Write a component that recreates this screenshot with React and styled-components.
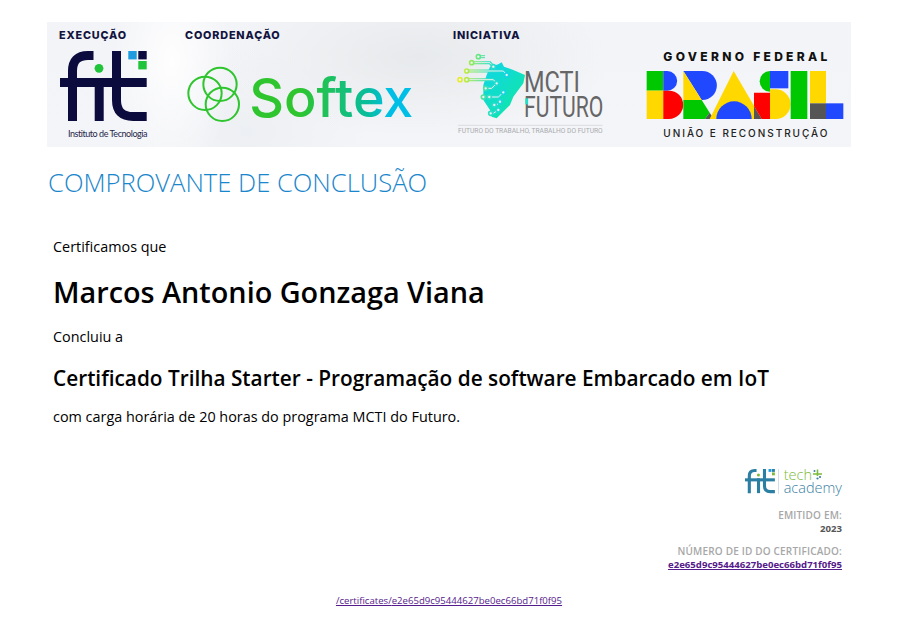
import React from 'react';
import styled, { createGlobalStyle } from 'styled-components';

const GlobalStyle = createGlobalStyle`
    html, body {
        margin: 0;
        padding: 0;
        background: white;
        color: black;
        font-family: "Open Sans", "Liberation Sans", sans-serif;
    }
`;

const Page = styled.div`
    width: 804px;
    padding: 22px 0 0 47px;
`;

const Banner = styled.header`
    display: flex;
    height: 125px;
    background:
        radial-gradient(ellipse 60px 120px at 125px 40px, rgba(255, 255, 255, 0.9), transparent),
        radial-gradient(ellipse 190px 80px at 370px 35px, rgba(228, 231, 233, 0.8), transparent),
        radial-gradient(ellipse 120px 90px at 200px 110px, rgba(232, 236, 240, 0.6), transparent),
        linear-gradient(180deg, #f3f4f7, #f4f5f8);
`;

const Column = styled.div`
    width: ${(p) => p.$width}px;
    flex: none;
`;

const Label = styled.div`
    margin: 8px 0 0 12px;
    font-family: Inter, "Liberation Sans", sans-serif;
    font-size: 10.8px;
    line-height: 12px;
    font-weight: 800;
    letter-spacing: 0.85px;
    color: #12143f;
`;

const Logo = styled.svg`
    display: block;
    overflow: visible;
    margin: ${(p) => p.$margin};
`;

const Caption = styled.div`
    margin: 7px 0 0 21px;
    font-family: Lato, sans-serif;
    font-size: 9px;
    line-height: 11px;
    letter-spacing: -0.45px;
    color: #26264a;
`;

const Heading = styled.h1`
    margin: 19px 0 0 1px;
    font-size: 25.6px;
    line-height: 34px;
    font-weight: 300;
    color: #1a86cc;
`;

const Content = styled.main`
    padding: 37px 0 0 6px;
`;

const Line = styled.p`
    margin: ${(p) => p.$margin || 0};
    font-size: 14.4px;
    line-height: 20px;
`;

const Name = styled.h2`
    margin: 16px 0 0;
    font-size: 28.8px;
    line-height: 38px;
    font-weight: 600;
`;

const Course = styled.h3`
    margin: 17px 0 0;
    font-size: 20.8px;
    line-height: 28px;
    font-weight: 600;
`;

const Meta = styled.aside`
    display: flex;
    flex-direction: column;
    align-items: flex-end;
    margin: 41px 9px 0 0;
`;

const MetaLabel = styled.div`
    margin-top: ${(p) => p.$top}px;
    font-size: 10px;
    line-height: 14px;
    font-weight: 600;
    letter-spacing: 0.18px;
    color: #a7a7a7;
`;

const MetaValue = styled.div`
    font-size: 9.6px;
    line-height: 14px;
    font-weight: 700;
    color: #555;
`;

const MetaLink = styled.a`
    font-size: 9.6px;
    line-height: 14px;
    font-weight: 700;
    color: #551a8b;
`;

const FooterLink = styled.a`
    display: block;
    margin-top: 22px;
    text-align: center;
    font-size: 9.6px;
    line-height: 14px;
    color: #551a8b;
`;

function FitMark({ ink, accent, width, margin }) {
    return (
        <Logo $margin={margin} width={width} height={(width * 70) / 87} viewBox="60 51 87 70">
            <g fill="none" stroke={ink} strokeWidth="9">
                <path d="M72.5 121V71q0-15.5 15.5-15.5H93.5" />
                <path d="M60 82.5H146.7" />
                <path d="M99.2 78V121" />
                <path d="M116.5 51V100q0 16.5 16.5 16.5H146.7" />
            </g>
            <circle cx="99" cy="68.3" r="4.4" fill={accent} />
            <rect x="128.3" y="51" width="8.4" height="8.4" fill="#1d9ce0" />
            <rect x="138.3" y="51" width="8.4" height="8.4" fill={ink} />
            <rect x="138.3" y="61" width="8.4" height="8.4" fill={accent} />
        </Logo>
    );
}

function SoftexLogo() {
    return (
        <Logo $margin="18px 0 0 7px" width="240" height="70" viewBox="0 0 720 210">
            <defs>
                <linearGradient id="softex" x1="210" x2="700" y1="0" y2="0" gradientUnits="userSpaceOnUse">
                    <stop offset="0.3" stopColor="#2ec52f" />
                    <stop offset="0.72" stopColor="#08bd9c" />
                    <stop offset="0.85" stopColor="#00bfe6" />
                </linearGradient>
            </defs>
            <g fill="none" stroke="#2ec52f" strokeWidth="6">
                <circle cx="75" cy="100" r="50" />
                <circle cx="120" cy="73" r="50" />
                <circle cx="127" cy="133" r="50" />
            </g>
            <text
                x="208"
                y="170"
                fontFamily="Inter, sans-serif"
                fontWeight="500"
                fontSize="160"
                fill="url(#softex)"
                textLength="492"
                lengthAdjust="spacingAndGlyphs"
            >
                Softex
            </text>
        </Logo>
    );
}

const circuits = [
    'M85 35H105',
    'M65 53H120L130 65',
    'M50 78H160L170 90',
    'M50 104H130L140 115',
    'M107 130H125L140 115',
    'M118 156H145L160 142',
    'M133 180H140L150 170',
    'M122 205H130L145 195',
];

const rings = [
    [85, 35], [65, 53], [130, 65], [50, 78], [170, 90], [30, 104], [50, 104], [140, 115],
    [107, 130], [100, 156], [118, 156], [160, 142], [133, 180], [150, 170], [122, 205], [145, 195],
];

function MctiLogo() {
    return (
        <Logo $margin="3px 0 0 9px" width="160" height="95" viewBox="0 0 480 285">
            <defs>
                <linearGradient id="mctiBand" x1="30" x2="170" y1="0" y2="0" gradientUnits="userSpaceOnUse">
                    <stop offset="0" stopColor="#e8ec30" />
                    <stop offset="0.25" stopColor="#90e860" />
                    <stop offset="0.6" stopColor="#30e0c0" />
                    <stop offset="1" stopColor="#10d4e4" />
                </linearGradient>
                <linearGradient id="mctiMap" x1="100" x2="225" y1="50" y2="170" gradientUnits="userSpaceOnUse">
                    <stop offset="0" stopColor="#10d4ec" />
                    <stop offset="1" stopColor="#10e6a8" />
                </linearGradient>
            </defs>
            <path
                d="M120 65L145 58L155 52L162 65L190 75L225 90L220 115L190 155L180 180L155 205L140 220L125 215L120 195L100 165L100 120L110 90Z"
                fill="url(#mctiMap)"
            />
            <g fill="none" stroke="url(#mctiBand)" strokeWidth="9">
                {circuits.map((d) => (
                    <path key={d} d={d} />
                ))}
            </g>
            <g fill="none" stroke="#e6f0ee" strokeWidth="3">
                {circuits.map((d) => (
                    <path key={d} d={d} />
                ))}
            </g>
            <g fill="#f2f5f5" stroke="url(#mctiBand)" strokeWidth="5">
                {rings.map(([cx, cy]) => (
                    <circle key={`${cx}-${cy}`} cx={cx} cy={cy} r="6" />
                ))}
            </g>
            <g fontFamily="Roboto, sans-serif" fontWeight="400" fill="#666">
                <text x="222" y="140" fontSize="88" textLength="168" lengthAdjust="spacingAndGlyphs">MCTI</text>
                <text x="222" y="215" fontSize="88" textLength="238" lengthAdjust="spacingAndGlyphs">FUTURO</text>
            </g>
            <rect x="226" y="160" width="8" height="18" fill="#1fe0c8" />
            <path d="M24 241H458" stroke="#cfd1d4" strokeWidth="2" />
            <text
                x="24"
                y="265"
                fontFamily="Roboto, sans-serif"
                fontSize="19"
                fill="#a9abae"
                textLength="434"
                lengthAdjust="spacingAndGlyphs"
            >
                FUTURO DO TRABALHO, TRABALHO DO FUTURO
            </text>
        </Logo>
    );
}

function BrasilLogo() {
    return (
        <Logo $margin="23px 0 0 9px" width="210" height="95" viewBox="0 0 630 285">
            <text
                x="70"
                y="47"
                fontFamily="Inter, sans-serif"
                fontWeight="800"
                fontSize="36"
                fill="#111"
                textLength="492"
            >
                GOVERNO FEDERAL
            </text>
            {/* B */}
            <rect x="20" y="78" width="50" height="59" fill="#00c800" />
            <path d="M70 78H82A29.5 29.5 0 0 1 82 137H70Z" fill="#1f48ff" />
            <rect x="20" y="137" width="50" height="85" fill="#ffd800" />
            <path d="M70 137H87A42.5 42.5 0 0 1 87 222H70Z" fill="#ff0000" />
            {/* R */}
            <path d="M130 78H187A43.5 43.5 0 0 1 187 165H185Z" fill="#1f48ff" />
            <path d="M130 78L185 165H130Z" fill="#ffd800" />
            <path d="M130 165H185L209 203L195 222H130Z" fill="#00c800" />
            <path d="M209 203L222 222H195Z" fill="#555" />
            {/* A */}
            <path d="M281 78L365 222H209Z" fill="#ffd800" />
            <path d="M229 222A53 53 0 0 1 335 222Z" fill="#1f48ff" />
            <path d="M342 183L365 222H342Z" fill="#555" />
            {/* S */}
            <path d="M390 78V140A31 31 0 0 1 390 78Z" fill="#00c800" />
            <rect x="390" y="78" width="55" height="52" fill="#1f48ff" />
            <path d="M342 143H390V222H365L342 183Z" fill="#ff0000" />
            <path d="M390 133H407A44.5 44.5 0 0 1 407 222H390Z" fill="#ffd800" />
            {/* I */}
            <rect x="452" y="78" width="50" height="144" fill="#00c800" />
            {/* L */}
            <rect x="510" y="78" width="48" height="97" fill="#ffd800" />
            <rect x="510" y="175" width="48" height="47" fill="#555" />
            <rect x="558" y="175" width="52" height="47" fill="#1f48ff" />
            <text
                x="70"
                y="277"
                fontFamily="Inter, sans-serif"
                fontWeight="500"
                fontSize="30"
                fill="#222"
                textLength="492"
            >
                UNIÃO E RECONSTRUÇÃO
            </text>
        </Logo>
    );
}

const TechMark = styled.div`
    display: flex;
    align-items: center;
    gap: 3px;
`;

const TechDivider = styled.div`
    width: 1px;
    height: 25px;
    background: #cfe0e8;
`;

const TechWords = styled.div`
    font-size: 14.5px;
    line-height: 13px;
    font-weight: 300;
    color: #3d7fa3;
    margin-left: 2px;
`;

const TechWord = styled.div`
    color: #7dbb3c;
    display: flex;
    align-items: center;
    gap: 1px;
`;

function TechAcademy() {
    return (
        <TechMark>
            <FitMark ink="#2b7fa3" accent="#7dbb3c" width={30} margin="0" />
            <TechDivider />
            <TechWords>
                <TechWord>
                    tech
                    <svg width="9" height="11" viewBox="0 0 9 11" aria-hidden="true">
                        <path d="M0 5H9M4.5 0.5V7" stroke="#7dbb3c" strokeWidth="1.6" />
                        <circle cx="7" cy="8" r="1.1" fill="#3d7fa3" />
                        <circle cx="4.5" cy="9.5" r="1.1" fill="#3d7fa3" />
                        <circle cx="1.5" cy="2" r="1" fill="#3d7fa3" />
                    </svg>
                </TechWord>
                academy
            </TechWords>
        </TechMark>
    );
}

export default function App() {
    const id = 'e2e65d9c95444627be0ec66bd71f0f95';
    return (
        <>
            <GlobalStyle />
            <Page>
                <Banner>
                    <Column $width={126}>
                        <Label>EXECUÇÃO</Label>
                        <FitMark ink="#0b0b3d" accent="#1fc43a" width={87} margin="9px 0 0 13px" />
                        <Caption>Instituto de Tecnologia</Caption>
                    </Column>
                    <Column $width={268}>
                        <Label>COORDENAÇÃO</Label>
                        <SoftexLogo />
                    </Column>
                    <Column $width={190}>
                        <Label>INICIATIVA</Label>
                        <MctiLogo />
                    </Column>
                    <Column $width={220}>
                        <BrasilLogo />
                    </Column>
                </Banner>
                <Heading>COMPROVANTE DE CONCLUSÃO</Heading>
                <Content>
                    <Line>Certificamos que</Line>
                    <Name>Marcos Antonio Gonzaga Viana</Name>
                    <Line $margin="16px 0 0">Concluiu a</Line>
                    <Course>Certificado Trilha Starter - Programação de software Embarcado em IoT</Course>
                    <Line $margin="15px 0 0">com carga horária de 20 horas do programa MCTI do Futuro.</Line>
                </Content>
                <Meta>
                    <TechAcademy />
                    <MetaLabel $top={14}>EMITIDO EM:</MetaLabel>
                    <MetaValue>2023</MetaValue>
                    <MetaLabel $top={8}>NÚMERO DE ID DO CERTIFICADO:</MetaLabel>
                    <MetaLink href={`#${id}`}>{id}</MetaLink>
                </Meta>
                <FooterLink href={`#/certificates/${id}`}>/certificates/{id}</FooterLink>
            </Page>
        </>
    );
}
